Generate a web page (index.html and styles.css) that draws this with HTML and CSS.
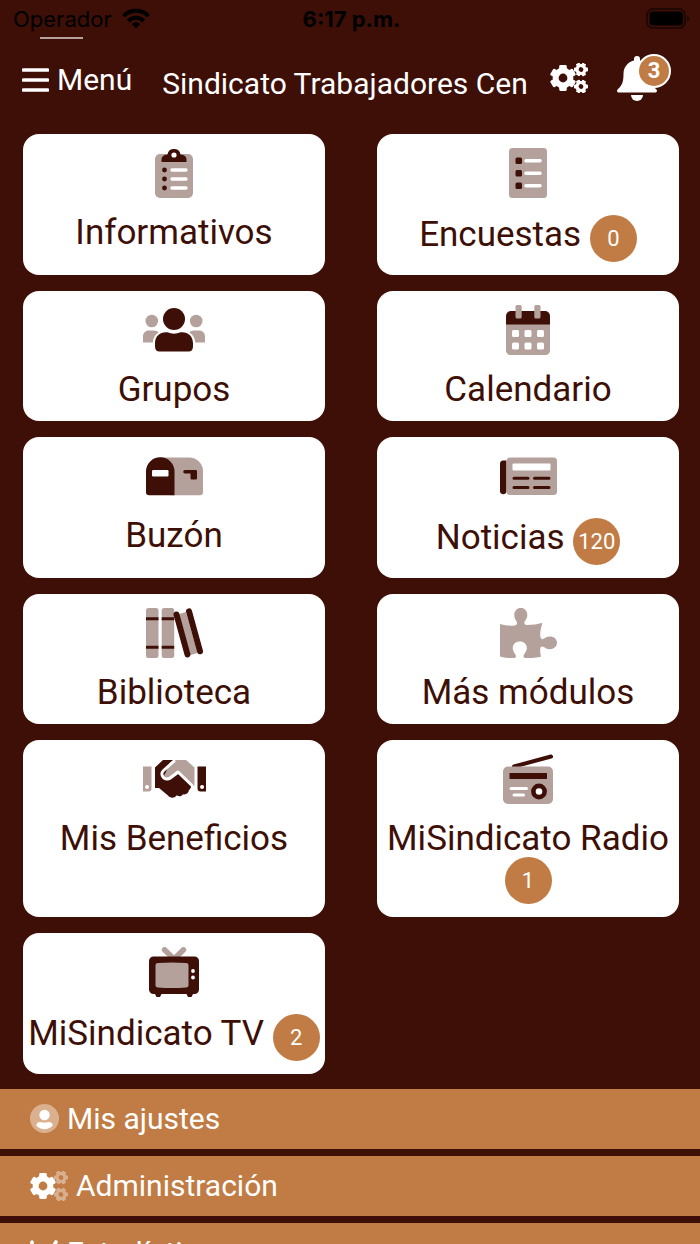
FILE: index.html
```html
<!DOCTYPE html>
<html lang="es">
<head>
    <meta charset="UTF-8">
    <meta name="viewport" content="width=device-width, initial-scale=1.0">
    <title>MiSindicato</title>
    <link rel="stylesheet" href="styles.css">
</head>
<body>
    <svg class="defs" aria-hidden="true">
        <symbol id="gear" viewBox="-13 -13 26 26">
            <circle r="7.4" fill="none" stroke="currentColor" stroke-width="6"/>
            <g fill="currentColor">
                <rect x="-3.8" y="-13" width="7.6" height="6" rx="1.4"/>
                <rect x="-3.8" y="-13" width="7.6" height="6" rx="1.4" transform="rotate(60)"/>
                <rect x="-3.8" y="-13" width="7.6" height="6" rx="1.4" transform="rotate(120)"/>
                <rect x="-3.8" y="-13" width="7.6" height="6" rx="1.4" transform="rotate(180)"/>
                <rect x="-3.8" y="-13" width="7.6" height="6" rx="1.4" transform="rotate(240)"/>
                <rect x="-3.8" y="-13" width="7.6" height="6" rx="1.4" transform="rotate(300)"/>
            </g>
        </symbol>
    </svg>

    <div class="status-bar">
        <div class="carrier">
            <span>Operador</span>
            <svg width="28" height="21" viewBox="0 0 28 21">
                <g fill="none" stroke="#000" stroke-width="4">
                    <path d="M1.5 8a17.5 17.5 0 0 1 25 0"/>
                    <path d="M6.3 13a10.8 10.8 0 0 1 15.4 0"/>
                </g>
                <path d="M14 20.5l-4.2-4.6a6 6 0 0 1 8.4 0z"/>
            </svg>
        </div>
        <span class="time">6:17 p.m.</span>
        <div class="battery">
            <svg width="44" height="21" viewBox="0 0 44 21">
                <rect x="1" y="1" width="38" height="19" rx="6" fill="none" stroke="#1f0803" stroke-width="2"/>
                <rect x="3.5" y="3.5" width="33.5" height="14" rx="4"/>
                <path d="M41 7.5c3 1 3 5 0 6z" fill="#1f0803"/>
            </svg>
        </div>
    </div>
    <div class="grabber"></div>

    <header class="top-bar">
        <button class="menu-button">
            <svg width="27" height="24" viewBox="0 0 27 24">
                <path d="M1.5 2h24M1.5 12h24M1.5 22h24" stroke="#fff" stroke-width="3.6" stroke-linecap="round"/>
            </svg>
            Menú
        </button>
        <h1>Sindicato Trabajadores Cen</h1>
        <button class="icon-button" aria-label="Configuración">
            <svg width="38" height="30" viewBox="0 0 38 30">
                <use href="#gear" x="0" y="2" width="26" height="26"/>
                <g transform="translate(31 6.5) rotate(30)"><use href="#gear" x="-7" y="-7" width="14" height="14"/></g>
                <g transform="translate(31 23.5) rotate(30)"><use href="#gear" x="-7" y="-7" width="14" height="14"/></g>
            </svg>
        </button>
        <button class="icon-button bell" aria-label="Notificaciones">
            <svg width="40" height="46" viewBox="0 0 40 46" fill="#fff">
                <path d="M17 4a3 3 0 0 1 6 0v1.5c6.5 1.5 10.5 7 10.5 13.5 0 8 1.5 11.5 5.5 15 1.8 1.7 1 3.6-1 3.6H2c-2 0-2.8-1.9-1-3.6 4-3.5 5.5-7 5.5-15C6.5 12.5 10.5 7 17 5.5z"/>
                <path d="M14 40h12a6 6 0 0 1-12 0z"/>
            </svg>
            <span class="bell-count">3</span>
        </button>
    </header>

    <main class="modules">
        <a class="card" href="#">
            <svg width="38" height="50" viewBox="0 0 38 50">
                <rect class="light" y="6" width="38" height="44" rx="5"/>
                <path class="dark" d="M6.500 14v-2c0-3.500 2-5 6-5.500a6.600 6.600 0 0 1 13 0c4 .5 6 2 6 5.500v2z"/>
                <circle cx="19" cy="7" r="2.6" fill="#fff"/>
                <g class="dark"><circle cx="9.5" cy="22" r="2.4"/><circle cx="9.5" cy="31" r="2.4"/><circle cx="9.5" cy="40" r="2.4"/></g>
                <path d="M17 22h14M17 31h14M17 40h14" stroke="#fff" stroke-width="3.4" stroke-linecap="round"/>
            </svg>
            <span class="title">Informativos</span>
        </a>
        <a class="card" href="#">
            <svg width="38" height="50" viewBox="0 0 38 50">
                <rect class="light" width="38" height="50" rx="3.5"/>
                <g class="dark"><rect x="6.5" y="9.5" width="6.5" height="6.5" rx="1.5"/><rect x="6.5" y="22" width="6.5" height="6.5" rx="1.5"/><rect x="6.5" y="34.5" width="6.5" height="6.5" rx="1.5"/></g>
                <path d="M17 12.8h14M17 25.3h14M17 37.8h14" stroke="#fff" stroke-width="3.6" stroke-linecap="round"/>
            </svg>
            <span class="title">Encuestas <span class="badge">0</span></span>
        </a>
        <a class="card" href="#">
            <svg width="62" height="50" viewBox="0 0 62 50">
                <g class="light">
                    <circle cx="8.8" cy="16" r="6.3"/><circle cx="53.2" cy="16" r="6.3"/>
                    <path d="M0 37.5v-6c0-3.500 2.500-6 6-6h5c2 0 3.500.7 4.700 1.900C12 29.500 10 33 9.700 37.500zM62 37.500v-6c0-3.500-2.500-6-6-6h-5c-2 0-3.500.7-4.700 1.900 3.700 2.100 5.700 5.600 6 10.100z"/>
                </g>
                <g class="dark">
                    <circle cx="31" cy="14" r="11"/>
                    <path d="M12 41.5v-3c0-7 4.5-11.2 11-11.2h1.500c4 1.800 9 1.800 13 0H39c6.500 0 11 4.200 11 11.200v3c0 3-1.500 5-4.500 5h-29c-3 0-4.500-2-4.500-5z"/>
                </g>
            </svg>
            <span class="title">Grupos</span>
        </a>
        <a class="card" href="#">
            <svg width="44" height="50" viewBox="0 0 44 50">
                <path class="light" d="M0 19h44v26.500a4.500 4.500 0 0 1-4.500 4.500h-35A4.500 4.500 0 0 1 0 45.500z"/>
                <path class="dark" d="M0 19.500V11a5 5 0 0 1 5-5h34a5 5 0 0 1 5 5v8.500z"/>
                <g class="light"><rect x="9.5" width="6.2" height="13.5" rx="1.5"/><rect x="28.3" width="6.2" height="13.5" rx="1.5"/></g>
                <g fill="#fff"><rect x="6" y="25" width="7" height="7" rx="1.5"/><rect x="18.5" y="25" width="7" height="7" rx="1.5"/><rect x="31" y="25" width="7" height="7" rx="1.5"/><rect x="6" y="37.5" width="7" height="7" rx="1.5"/><rect x="18.5" y="37.5" width="7" height="7" rx="1.5"/><rect x="31" y="37.5" width="7" height="7" rx="1.5"/></g>
            </svg>
            <span class="title">Calendario</span>
        </a>
        <a class="card" href="#">
            <svg width="57" height="50" viewBox="0 0 57 50">
                <path class="light" d="M14 6.500h29a14 14 0 0 1 14 14V41a3.200 3.200 0 0 1-3.200 3.200H24z"/>
                <path class="dark" d="M0 20.500a14 14 0 0 1 28.500 0v23.700H3A3 3 0 0 1 0 41z"/>
                <rect x="6" y="19" width="16.5" height="6.5" rx="1.2" fill="#fff"/>
                <path class="dark" d="M39 19h10.500c1 0 1.500.5 1.500 1.500v6.500c0 1-.5 1.500-1.500 1.500h-3.500c-1 0-1.500-.5-1.500-1.500v-4.500H39c-2.200 0-2.200-3.500 0-3.500z"/>
            </svg>
            <span class="title">Buzón</span>
        </a>
        <a class="card" href="#">
            <svg width="57" height="50" viewBox="0 0 57 50">
                <path class="dark" d="M6.500 9.500v31a3.300 3.300 0 0 1-6.500 0V13c0-2 1-3.500 3-3.500z"/>
                <rect class="light" x="6.5" y="6.5" width="50.5" height="37.5" rx="3.5"/>
                <rect x="12.5" y="12.5" width="38" height="7" rx="1" fill="#fff"/>
                <path d="M14 27.200h14M34.500 27.200h14.500M14 36.500h14M34.500 36.500h14.500" stroke="#3d0f06" stroke-width="3" stroke-linecap="round"/>
            </svg>
            <span class="title">Noticias <span class="badge">120</span></span>
        </a>
        <a class="card" href="#">
            <svg width="57" height="50" viewBox="0 0 57 50">
                <g class="light"><rect width="12.5" height="50" rx="2.5"/><rect x="15.7" width="12.5" height="50" rx="2.5"/><path d="M33 6l7-2 11.500 41-7 2z"/></g>
                <path d="M0 10.700h12.500M15.700 10.700h12.500M0 39.200h12.500M15.700 39.200h12.500" stroke="#3d0f06" stroke-width="3"/>
                <path d="M30.500 6.500l11 40M43 3.300l11 40" stroke="#3d0f06" stroke-width="6" stroke-linecap="round"/>
            </svg>
            <span class="title">Biblioteca</span>
        </a>
        <a class="card" href="#">
            <svg width="57" height="50" viewBox="0 0 57 50">
                <path class="light" d="M0 16c5 1.500 10 2 14.500 1.500 2.500-.3 3.200-2 2-4.200C15 11 14.300 9.500 14.300 7c0-4.300 2.700-7 6.500-7s6.500 2.700 6.500 7c0 2.500-1 4-2.300 6-1.500 2.500-.5 4 2 4 5.500 0 10.500-.7 15.500-2.200-1.500 4.500-2.300 8.500-2.300 12.200 0 3.800 1.500 5 4 3.500 1.800-1.200 3.300-2 5.600-2 4.200 0 7.200 2.600 7.200 6.300s-3 6.400-7.200 6.400c-2.400 0-3.800-.8-5.600-2-2.500-1.500-4-.5-4 2.500 0 2.500.2 4.300.8 7-5 1-9.500 1.500-14 1.500-3.500 0-4.500-1.500-2.700-4.200 1.500-2.200 2.500-3.500 2.500-6 0-4-3-6.500-7-6.500s-7 2.500-7 6.500c0 2.500.8 3.800 2.300 6 1.800 2.700.8 4.200-2.400 4.200C7.500 50.200 4 49.500 0 48.500z"/>
            </svg>
            <span class="title">Más módulos</span>
        </a>
        <a class="card" href="#">
            <svg width="63" height="50" viewBox="0 0 63 50">
                <path class="light" fill-rule="evenodd" d="M0 12.500h8.500v22c0 2-1 3-3 3H0zM4 31a2 2 0 1 0 .1 0z"/>
                <path class="dark" fill-rule="evenodd" d="M63 12.500h-8.500v22c0 2 1 3 3 3H63zM59 31a2 2 0 1 0 .1 0z"/>
                <path class="dark" d="M12 13.500L20 6h12l15 23.500c2 2.500 1 5-1 6.500-.5 3-3 5-6 4.200-1.800 2.500-4.200 2.500-6 1-3 3.500-7 3-9 .3L16 34h-4z"/>
                <path class="light" d="M27 8.500Q29.500 6 33 6h10l8.500 7.500v18h-2.500L36 19.500l-8 6c-5 3-9-3-5.500-6.500z"/>
                <path d="M31 7.200L20.500 16.500c-4.500 4.500 1.500 11 6.500 7.500l8-6 13.500 13" fill="none" stroke="#fff" stroke-width="3" stroke-linecap="round" stroke-linejoin="round"/>
            </svg>
            <span class="title">Mis Beneficios</span>
        </a>
        <a class="card" href="#">
            <svg width="50" height="50" viewBox="0 0 50 50">
                <path d="M11 12.500L48 2.500" stroke="#3d0f06" stroke-width="4" stroke-linecap="round"/>
                <rect class="light" y="12.5" width="50" height="37.5" rx="5"/>
                <rect class="dark" x="6.5" y="19" width="37.5" height="6" rx=".5"/>
                <circle cx="36" cy="37.5" r="5.6" fill="#fff" stroke="#3d0f06" stroke-width="4.6"/>
                <path d="M8 34.500h15.500M11 41h9.500" stroke="#fff" stroke-width="3" stroke-linecap="round"/>
            </svg>
            <span class="title">MiSindicato Radio <span class="badge">1</span></span>
        </a>
        <a class="card" href="#">
            <svg width="50" height="50" viewBox="0 0 50 50">
                <path d="M15.500 2.800L25 12l9.500-9.200" fill="none" stroke="#b4a19c" stroke-width="5.5" stroke-linecap="round"/>
                <path class="dark" d="M4.500 9.500h41A4.500 4.500 0 0 1 50 14v28.500a4.500 4.500 0 0 1-4.500 4.500H44l-1.500 3h-3.500l-1.500-3h-25L11 50H7.500L6 47H4.500A4.500 4.500 0 0 1 0 42.500V14a4.500 4.500 0 0 1 4.500-4.500z"/>
                <path d="M6.500 18Q6.500 16 9 16q14-1 28 0 2.500 0 2.500 2v20.500q0 2-2.500 2-14 1-28 0-2.500 0-2.500-2z" fill="#b4a19c"/>
                <g fill="#fff"><circle cx="44" cy="24" r="1.9"/><circle cx="44" cy="30.5" r="1.9"/></g>
            </svg>
            <span class="title">MiSindicato TV <span class="badge">2</span></span>
        </a>
    </main>

    <nav class="options">
        <a class="option" href="#">
            <svg width="29" height="29" viewBox="0 0 29 29" fill="#fff">
                <circle cx="14.5" cy="14.5" r="14.5" opacity=".4"/>
                <circle cx="14.5" cy="11" r="5.2"/>
                <path d="M6.300 21.500c0-2.500 1.700-3.500 4-3.500 2.800.8 5.600.8 8.400 0 2.300 0 4 1 4 3.500-4.500 5-12 5-16.400 0z"/>
            </svg>
            Mis ajustes
        </a>
        <a class="option" href="#">
            <svg width="38" height="30" viewBox="0 0 38 30">
                <use href="#gear" x="0" y="2" width="26" height="26"/>
                <g class="faded">
                    <g transform="translate(31 6.5) rotate(30)"><use href="#gear" x="-7" y="-7" width="14" height="14"/></g>
                    <g transform="translate(31 23.5) rotate(30)"><use href="#gear" x="-7" y="-7" width="14" height="14"/></g>
                </g>
            </svg>
            Administración
        </a>
        <a class="option" href="#">
            <svg width="29" height="26" viewBox="0 0 29 26" fill="none" stroke="#fff" stroke-width="3.6" stroke-linecap="round" stroke-linejoin="round">
                <path d="M2 2v22h25"/>
                <path d="M8 15l6-6 5 5 7-12"/>
            </svg>
            Estadísticas
        </a>
    </nav>
</body>
</html>
```

FILE: styles.css
```css
* {
  box-sizing: border-box;
  margin: 0;
}

body {
  height: 100vh;
  overflow: hidden;
  background-color: #3d0f06;
  color: #fff;
  font-family: Roboto, "Liberation Sans", sans-serif;
}

svg {
  display: block;
  flex-shrink: 0;
}

a {
  color: inherit;
  text-decoration: none;
}

button {
  padding: 0;
  border: none;
  background: none;
  color: inherit;
  font-family: inherit;
  cursor: pointer;
}

.defs {
  position: absolute;
  width: 0;
  height: 0;
}

/* Phone status bar */
.status-bar {
  display: grid;
  grid-template-columns: 1fr auto 1fr;
  align-items: center;
  height: 37px;
  padding: 0 10px 0 13px;
  color: #000;
  font-family: Inter, sans-serif;
  font-size: 22px;
}

.carrier {
  display: flex;
  align-items: center;
  gap: 10px;
}

.time {
  font-weight: 700;
}

.battery {
  justify-self: end;
}

.grabber {
  width: 43px;
  height: 2px;
  margin-left: 40px;
  background-color: #b4a19c;
}

/* Header */
.top-bar {
  display: flex;
  align-items: center;
  height: 81px;
  padding: 0 43px 0 22px;
}

.menu-button {
  display: flex;
  align-items: center;
  gap: 8px;
  font-size: 30px;
}

.top-bar h1 {
  flex: 1;
  padding: 8px 0 0 30px;
  overflow: hidden;
  font-size: 30px;
  font-weight: 400;
  white-space: nowrap;
}

.icon-button {
  position: relative;
  margin-left: 12px;
  padding-bottom: 3px;
}

.bell {
  margin-left: 29px;
}

.bell-count {
  position: absolute;
  top: -1px;
  right: -14px;
  width: 34px;
  height: 34px;
  border: 2px solid #fff;
  border-radius: 50%;
  background-color: #c17c45;
  font-size: 22px;
  font-weight: 700;
  line-height: 30px;
}

/* Module grid */
.modules {
  display: grid;
  grid-template-columns: 1fr 1fr;
  gap: 16px 52px;
  padding: 14px 21px 15px 23px;
}

.card {
  display: flex;
  flex-direction: column;
  align-items: center;
  gap: 17px;
  padding: 14px 0 13px;
  border-radius: 16px;
  background-color: #fff;
  color: #3d0f06;
  font-size: 35px;
  line-height: 36px;
  text-align: center;
}

.dark {
  fill: #3d0f06;
}

.light {
  fill: #b4a19c;
}

.badge {
  display: inline-block;
  width: 47px;
  height: 47px;
  border-radius: 50%;
  background-color: #c17c45;
  color: #fff;
  font-size: 22px;
  line-height: 47px;
}

/* Bottom options */
.options {
  display: flex;
  flex-direction: column;
  gap: 7px;
}

.option {
  display: flex;
  flex-shrink: 0;
  align-items: center;
  gap: 8px;
  height: 60px;
  padding: 0 30px 1px;
  background-color: #c17c45;
  font-size: 30px;
}

.faded {
  opacity: 0.4;
}
```
